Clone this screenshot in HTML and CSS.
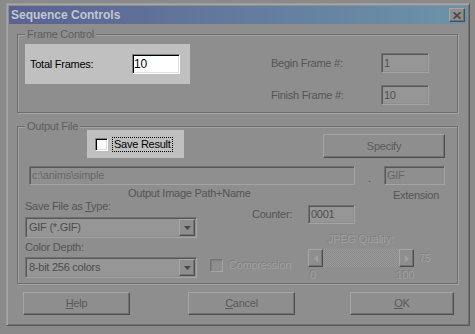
FILE: index.html
```html
<!DOCTYPE html>
<html lang="en">
<head>
    <meta charset="UTF-8">
    <title>Sequence Controls</title>
    <link rel="stylesheet" href="styles.css">
</head>
<body>
    <div class="dialog">
        <!-- Title bar -->
        <div class="titlebar">
            <span class="title">Sequence Controls</span>
            <div class="close-btn">
                <svg width="8" height="7" viewBox="0 0 8 7"><path d="M0.5 0.3 7.5 6.7M7.5 0.3 0.5 6.7" stroke="#4a4a4a" stroke-width="1.7" fill="none"/></svg>
            </div>
        </div>

        <!-- Frame Control -->
        <div class="group frame-group">
            <span class="group-title">Frame Control</span>
            <div class="spot total-spot">
                <span class="total-label">Total Frames:</span>
                <div class="spot-edit">10</div>
            </div>
            <div class="frame-range">
                <div class="range-row">
                    <span class="range-label">Begin Frame #:</span>
                    <div class="edit range-edit">1</div>
                </div>
                <div class="range-row">
                    <span class="range-label">Finish Frame #:</span>
                    <div class="edit range-edit">10</div>
                </div>
            </div>
        </div>

        <!-- Output File -->
        <div class="group output-group">
            <span class="group-title">Output File</span>
            <div class="out-top">
                <div class="spot save-spot">
                    <div class="check"></div>
                    <span class="save-label">Save Result</span>
                </div>
                <div class="btn specify-btn">Specify</div>
            </div>
            <div class="out-path">
                <div class="edit edit-off path-edit">c:\anims\simple</div>
                <span class="dot">.</span>
                <div class="edit edit-off ext-edit">GIF</div>
            </div>
            <div class="out-caps">
                <span class="path-cap">Output Image Path+Name</span>
                <span class="ext-cap">Extension</span>
            </div>
            <div class="out-lower">
                <div class="type-col">
                    <div class="type-label">Save File as <u>T</u>ype:</div>
                    <div class="combo">
                        <span class="combo-text">GIF (*.GIF)</span>
                        <div class="combo-btn"><svg width="7" height="4" viewBox="0 0 7 4"><path d="M0 0h7L3.5 4z" fill="#4a4a4a"/></svg></div>
                    </div>
                    <div class="depth-label">Color Depth:</div>
                    <div class="combo">
                        <span class="combo-text">8-bit 256 colors</span>
                        <div class="combo-btn"><svg width="7" height="4" viewBox="0 0 7 4"><path d="M0 0h7L3.5 4z" fill="#4a4a4a"/></svg></div>
                    </div>
                </div>
                <div class="opt-col">
                    <div class="counter-row">
                        <span class="counter-label">Counter:</span>
                        <div class="edit counter-edit">0001</div>
                    </div>
                    <div class="quality-row">
                        <div class="compress">
                            <div class="small-check"></div>
                            <span class="dis compress-label">Compression</span>
                        </div>
                        <div class="quality">
                            <div class="dis quality-label">JPEG Quality:</div>
                            <div class="slider-row">
                                <div class="slider">
                                    <div class="slider-btn"><svg width="4" height="7" viewBox="0 0 4 7"><path d="M4 0v7L0 3.5z" fill="#a2a2a2"/></svg></div>
                                    <div class="slider-track"></div>
                                    <div class="slider-btn"><svg width="4" height="7" viewBox="0 0 4 7"><path d="M0 0v7l4-3.5z" fill="#a2a2a2"/></svg></div>
                                </div>
                                <span class="dis slider-value">75</span>
                            </div>
                            <div class="dis scale"><span>0</span><span>100</span></div>
                        </div>
                    </div>
                </div>
            </div>
        </div>

        <!-- Buttons -->
        <div class="buttons">
            <div class="btn wide-btn help-btn"><span><u>H</u>elp</span></div>
            <div class="btn wide-btn cancel-btn"><span><u>C</u>ancel</span></div>
            <div class="btn wide-btn ok-btn"><span><u>O</u>K</span></div>
        </div>
    </div>
</body>
</html>
```

FILE: styles.css
```css
body {
    margin: 0;
    background: #8a8a8a;
    font-family: "Liberation Sans", Arial, sans-serif;
    font-size: 11px;
    line-height: 13px;
    letter-spacing: -0.25px;
    color: #555;
}
.dialog {
    box-sizing: border-box;
    width: 464px;
    height: 323px;
    margin: 3px 0 0 6px;
    padding: 2px;
    background: #8e8e8e;
    border: 1px solid;
    border-color: #9c9c9c #585858 #585858 #9c9c9c;
    box-shadow: inset 1px 1px 0 #a6a6a6, inset -1px -1px 0 #727272;
}

/* Title bar */
.titlebar {
    height: 18px;
    display: flex;
    align-items: center;
    padding-left: 2px;
    background: linear-gradient(to right, #5a6290, #6c93aa);
}
.title {
    font-weight: bold;
    font-size: 12px;
    letter-spacing: 0;
    color: #c2c6d2;
}
.close-btn {
    box-sizing: border-box;
    width: 16px;
    height: 14px;
    margin-left: auto;
    margin-right: 2px;
    display: flex;
    align-items: center;
    justify-content: center;
    background: #8e8e8e;
    border: 1px solid;
    border-color: #a6a6a6 #4e4e4e #4e4e4e #a6a6a6;
    box-shadow: inset -1px -1px 0 #727272;
}

/* Group boxes */
.group {
    position: relative;
    box-sizing: border-box;
    width: 441px;
    margin-left: 8px;
    border: 1px solid #6e6e6e;
    box-shadow: inset 1px 1px 0 #a4a4a4, 1px 1px 0 #a4a4a4;
}
.group-title {
    position: absolute;
    top: -7px;
    left: 7px;
    padding: 0 2px;
    background: #8e8e8e;
    color: #5e5e5e;
}
.frame-group {
    height: 79px;
    margin-top: 10px;
    display: flex;
    align-items: flex-start;
}
.output-group {
    height: 158px;
    margin-top: 13px;
}

/* Highlighted spots */
.spot {
    box-sizing: border-box;
    display: flex;
    align-items: center;
    background: #c0c0c0;
    color: #000;
}
.total-spot {
    width: 165px;
    height: 40px;
    margin: 9px 0 0 7px;
    padding-left: 5px;
}
.total-label {
    width: 102px;
}
.spot-edit {
    box-sizing: border-box;
    width: 48px;
    height: 20px;
    padding-left: 1px;
    display: flex;
    align-items: center;
    font-size: 12px;
    background: #fff;
    border: 1px solid;
    border-color: #808080 #fff #fff #808080;
    box-shadow: inset 1px 1px 0 #000, inset -1px -1px 0 #dfdfdf;
}
.save-spot {
    width: 97px;
    height: 28px;
    margin-left: 69px;
    padding-left: 8px;
}
.check {
    box-sizing: border-box;
    width: 13px;
    height: 13px;
    background: #fff;
    border: 1px solid;
    border-color: #808080 #fff #fff #808080;
    box-shadow: inset 1px 1px 0 #000, inset -1px -1px 0 #dfdfdf;
}
.save-label {
    margin-left: 4px;
    padding: 0 1px;
    border: 1px dotted #000;
}

/* Dimmed edits */
.edit {
    box-sizing: border-box;
    height: 20px;
    padding-left: 2px;
    display: flex;
    align-items: center;
    background: #969696;
    color: #505050;
    border: 1px solid;
    border-color: #707070 #a4a4a4 #a4a4a4 #707070;
    box-shadow: inset 1px 1px 0 #585858, inset -1px -1px 0 #8e8e8e;
}
.edit-off {
    background: #8f8f8f;
    color: #686868;
}
.frame-range {
    margin: 18px 28px 0 auto;
    display: flex;
    flex-direction: column;
    gap: 12px;
}
.range-row {
    display: flex;
    align-items: center;
}
.range-label {
    width: 110px;
}
.range-edit {
    width: 48px;
}

/* Buttons */
.btn {
    box-sizing: border-box;
    display: flex;
    align-items: center;
    justify-content: center;
    background: #8e8e8e;
    color: #5a5a5a;
    border: 1px solid;
    border-color: #a6a6a6 #4e4e4e #4e4e4e #a6a6a6;
    box-shadow: inset -1px -1px 0 #727272;
}
.specify-btn {
    width: 122px;
    height: 24px;
    margin: 4px 12px 0 auto;
}

/* Output file rows */
.out-top {
    display: flex;
    align-items: flex-start;
    margin-top: 3px;
}
.out-path {
    display: flex;
    margin-top: 8px;
}
.path-edit {
    width: 326px;
    height: 19px;
    margin-left: 11px;
}
.dot {
    width: 29px;
    text-align: center;
    align-self: flex-end;
    line-height: 13px;
}
.ext-edit {
    width: 61px;
    height: 19px;
}
.out-caps {
    display: flex;
    height: 13px;
    margin-top: 2px;
}
.path-cap {
    margin-left: 110px;
}
.ext-cap {
    width: 62px;
    margin: 2px 10px 0 auto;
    text-align: center;
}
.out-lower {
    display: flex;
}
.type-col {
    width: 172px;
    margin-left: 7px;
}
.combo {
    box-sizing: border-box;
    height: 21px;
    margin-top: 4px;
    display: flex;
    align-items: center;
    background: #969696;
    color: #4c4c4c;
    border: 1px solid;
    border-color: #707070 #a4a4a4 #a4a4a4 #707070;
    box-shadow: inset 1px 1px 0 #585858, inset -1px -1px 0 #8e8e8e;
    padding: 1px 1px 1px 3px;
}
.combo-text {
    flex: 1;
}
.combo-btn {
    box-sizing: border-box;
    width: 16px;
    height: 17px;
    display: flex;
    align-items: center;
    justify-content: center;
    background: #8e8e8e;
    border: 1px solid;
    border-color: #a6a6a6 #4e4e4e #4e4e4e #a6a6a6;
    box-shadow: inset -1px -1px 0 #727272;
}
.depth-label {
    margin-top: 3px;
}
.depth-label + .combo {
    margin-top: 3px;
}
.opt-col {
    margin-left: 13px;
}
.counter-row {
    display: flex;
    align-items: center;
    margin-top: 5px;
}
.counter-label {
    width: 56px;
    margin-left: 42px;
}
.counter-edit {
    width: 47px;
    height: 19px;
}
.quality-row {
    display: flex;
    margin-top: 9px;
}
.compress {
    width: 98px;
    height: 13px;
    margin-top: 26px;
    display: flex;
    align-items: center;
}
.small-check {
    box-sizing: border-box;
    width: 13px;
    height: 13px;
    border: 1px solid;
    border-color: #727272 #a4a4a4 #a4a4a4 #727272;
    box-shadow: inset 1px 1px 0 #808080;
}
.compress-label {
    margin-left: 6px;
}
.dis {
    color: #a0a0a0;
    text-shadow: -1px -1px 0 rgba(110, 110, 110, 0.5);
}
.quality-label {
    width: 106px;
    text-align: center;
}
.slider-row {
    display: flex;
    align-items: center;
    margin-top: 3px;
}
.slider {
    width: 106px;
    height: 18px;
    display: flex;
}
.slider-btn {
    box-sizing: border-box;
    width: 15px;
    height: 18px;
    display: flex;
    align-items: center;
    justify-content: center;
    background: #8e8e8e;
    border: 1px solid;
    border-color: #a6a6a6 #4e4e4e #4e4e4e #a6a6a6;
    box-shadow: inset -1px -1px 0 #727272;
}
.slider-track {
    flex: 1;
    background: repeating-conic-gradient(#9a9a9a 0 25%, #8a8a8a 0 50%) 0 0 / 2px 2px;
}
.slider-value {
    margin-left: 5px;
}
.scale {
    width: 106px;
    margin-top: 3px;
    padding-left: 2px;
    box-sizing: border-box;
    display: flex;
    justify-content: space-between;
    line-height: 11px;
}

/* Bottom buttons */
.buttons {
    display: flex;
    margin-top: 8px;
    padding-left: 14px;
}
.wide-btn {
    width: 107px;
    height: 23px;
}
.cancel-btn {
    margin-left: 58px;
}
.ok-btn {
    width: 104px;
    margin-left: 55px;
}
```
